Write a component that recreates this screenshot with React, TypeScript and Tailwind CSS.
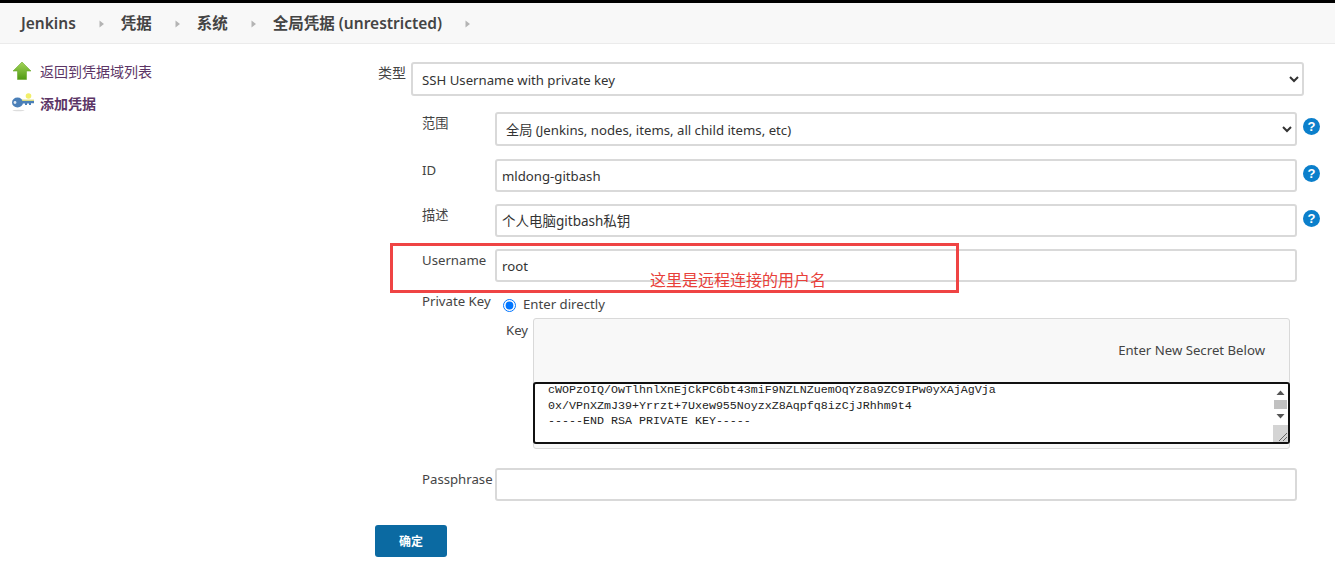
import React from "react";

const sans = "font-['Noto_Sans','Noto_Sans_CJK_SC',sans-serif]";

const crumbs = ["Jenkins", "凭据", "系统", "全局凭据 (unrestricted)"];

const Sep = () => (
  <svg width="6" height="8" viewBox="0 0 6 8" className="ml-[23px] mr-[16px]">
    <path d="M0.5 0.5 L5 4 L0.5 7.5 Z" fill="#b4b4b4" />
  </svg>
);

const UpIcon = () => (
  <svg width="20" height="20" viewBox="0 0 20 20">
    <defs>
      <linearGradient id="up" x1="0" y1="0" x2="0" y2="1">
        <stop offset="0" stopColor="#a4d45a" />
        <stop offset="1" stopColor="#4f9a12" />
      </linearGradient>
    </defs>
    <path d="M10 1 L19 10 H14.5 V18.5 H5.5 V10 H1 Z" fill="url(#up)" stroke="#6aa92c" strokeWidth="0.6" />
  </svg>
);

const KeyIcon = () => (
  <svg width="24" height="22" viewBox="0 0 24 22">
    <circle cx="17.5" cy="4" r="2.8" fill="#f2ef6a" />
    <ellipse cx="6.5" cy="10.5" rx="5.5" ry="5" fill="#4a7fb8" />
    <circle cx="4" cy="10.5" r="1.4" fill="#dfe9f4" />
    <path d="M10 8.8 H23 V11.2 H20 V13 H18 V11.6 H16 V13 H14 V11.6 H10 Z" fill="#4a7fb8" />
    <path d="M11 7.6 H23 V8.8 H11 Z" fill="#d9d76a" />
    <ellipse cx="7.5" cy="18.5" rx="6" ry="0.8" fill="#dddddd" />
  </svg>
);

const Help = () => (
  <div className="w-[17px] h-[17px] shrink-0 rounded-full bg-[#0b7fcb] flex items-center justify-center text-white text-[13px] font-bold leading-none font-['Liberation_Sans',sans-serif]">
    ?
  </div>
);

const fieldCls =
  "bg-white border-2 border-[#d9d9d9] rounded-[3px] px-[5px] text-[#333] outline-none";

const Row = ({
  label,
  children,
  help,
  className,
}: {
  label: string;
  children: React.ReactNode;
  help?: boolean;
  className?: string;
}) => (
  <div className={`flex items-start ${className ?? ""}`}>
    <div className="w-[120px] pl-[47px] shrink-0 text-[13.2px] text-[#444] leading-[20px] pt-px whitespace-nowrap">
      {label}
    </div>
    <div className="w-[802px] shrink-0">{children}</div>
    {help && (
      <div className="pl-[6px] pt-[6px]">
        <Help />
      </div>
    )}
  </div>
);

const keyLines = [
  "cWOPzOIQ/OwTlhnlXnEjCkPC6bt43miF9NZLNZuemOqYz8a9ZC9IPw0yXAjAgVja",
  "0x/VPnXZmJ39+Yrrzt+7Uxew955NoyzxZ8Aqpfq8izCjJRhhm9t4",
  "-----END RSA PRIVATE KEY-----",
];

export default function App() {
  return (
    <div className={`relative w-[1335px] h-[564px] overflow-hidden bg-white ${sans}`}>
      <div className="h-[3px] bg-black" />
      <header className="h-[41px] bg-[#f8f8f8] border-b border-[#ebebeb] flex items-center pl-[21px] pt-[2px] text-[15.5px] font-semibold text-[#444]">
        {crumbs.map((c) => (
          <React.Fragment key={c}>
            <span className="whitespace-nowrap">{c}</span>
            <Sep />
          </React.Fragment>
        ))}
      </header>

      <div className="flex">
        <aside className="w-[375px] shrink-0 pl-[12px] pt-[17px] text-[14px] text-[#5c3566]">
          <div className="flex items-center h-[20px]">
            <div className="w-[28px]">
              <UpIcon />
            </div>
            <span>返回到凭据域列表</span>
          </div>
          <div className="flex items-center h-[22px] mt-[11px] font-semibold">
            <div className="w-[28px] -ml-px mr-px">
              <KeyIcon />
            </div>
            <span>添加凭据</span>
          </div>
        </aside>

        <main className="flex-1">
          <div className="flex items-start pt-[18px]">
            <div className="w-[36px] pl-[3px] shrink-0 text-[14px] text-[#444] leading-[20px] pt-px">类型</div>
            <select className={`${fieldCls} pt-[2px] w-[893px] h-[34px] text-[13.2px]`} defaultValue="ssh">
              <option value="ssh">SSH Username with private key</option>
            </select>
          </div>

          <Row label="范围" help className="mt-[16px]">
            <select className={`${fieldCls} pt-[2px] w-full h-[34px] text-[13.2px]`} defaultValue="g">
              <option value="g">全局 (Jenkins, nodes, items, all child items, etc)</option>
            </select>
          </Row>
          <Row label="ID" help className="mt-[13px]">
            <input className={`${fieldCls} w-full h-[33px] text-[13.2px]`} defaultValue="mldong-gitbash" />
          </Row>
          <Row label="描述" help className="mt-[12px]">
            <input className={`${fieldCls} pb-[2px] w-full h-[33px] text-[13.5px]`} defaultValue="个人电脑gitbash私钥" />
          </Row>
          <Row label="Username" className="mt-[12px]">
            <input className={`${fieldCls} w-full h-[33px] text-[13.2px]`} defaultValue="root" />
          </Row>

          <div className="flex items-center mt-[13px] h-[20px] text-[13.2px] text-[#444]">
            <div className="w-[128px] pl-[47px] shrink-0 -mt-[6px] whitespace-nowrap">Private Key</div>
            <input type="radio" defaultChecked className="w-[13px] h-[13px] m-0" />
            <span className="ml-[7px]">Enter directly</span>
          </div>

          <div className="flex items-start mt-[3px]">
            <div className="w-[158px] pl-[131px] shrink-0 text-[13.2px] text-[#444] pt-[3px]">Key</div>
            <div className="w-[757px] shrink-0 h-[131px] bg-[#f8f8f8] border border-[#d9d9d9] rounded-[3px] flex flex-col">
              <div className="h-[63px] flex items-center justify-end pr-[24px] text-[13.2px] text-[#444]">
                Enter New Secret Below
              </div>
              <div className="h-[62px] -mx-px bg-white border-2 border-[#111] rounded-[3px] flex overflow-hidden">
                <div className="flex-1 pl-[13px] -mt-px font-['Liberation_Mono',monospace] text-[11.67px] leading-[15.5px] text-[#222] whitespace-pre">
                  {keyLines.map((l) => (
                    <div key={l}>{l}</div>
                  ))}
                </div>
                <div className="w-[15px] shrink-0 flex flex-col items-center bg-white">
                  <svg width="15" height="16" viewBox="0 0 15 16">
                    <path d="M3.5 11 L7.5 6.5 L11.5 11 Z" fill="#555" />
                  </svg>
                  <div className="w-[13px] h-[9px] bg-[#c1c1c1]" />
                  <svg width="15" height="16" viewBox="0 0 15 16">
                    <path d="M3.5 5 L7.5 9.5 L11.5 5 Z" fill="#555" />
                  </svg>
                  <div className="flex-1 w-full bg-[#d4d4d4] relative">
                    <svg width="15" height="16" viewBox="0 0 15 16" className="absolute right-0 bottom-0">
                      <path d="M6 15 L14 7 M10 15 L14 11" stroke="#666" strokeWidth="1" />
                    </svg>
                  </div>
                </div>
              </div>
            </div>
          </div>

          <Row label="Passphrase" className="mt-[19px]">
            <input className={`${fieldCls} w-full h-[33px] text-[13.2px]`} defaultValue="" />
          </Row>

          <button className="mt-[24px] w-[72px] h-[32px] pt-[2px] bg-[#0b6aa2] rounded-[3px] text-white text-[12px] font-bold">
            确定
          </button>
        </main>
      </div>

      {/* annotation drawn over the screenshot */}
      <div className="absolute left-[390px] top-[243px] w-[569px] h-[50px] border-[3px] border-[#ef4444] pointer-events-none" />
      <div className="absolute left-[650px] top-[270px] text-[16px] leading-[20px] text-[#e8403a] pointer-events-none whitespace-nowrap">
        这里是远程连接的用户名
      </div>
    </div>
  );
}
